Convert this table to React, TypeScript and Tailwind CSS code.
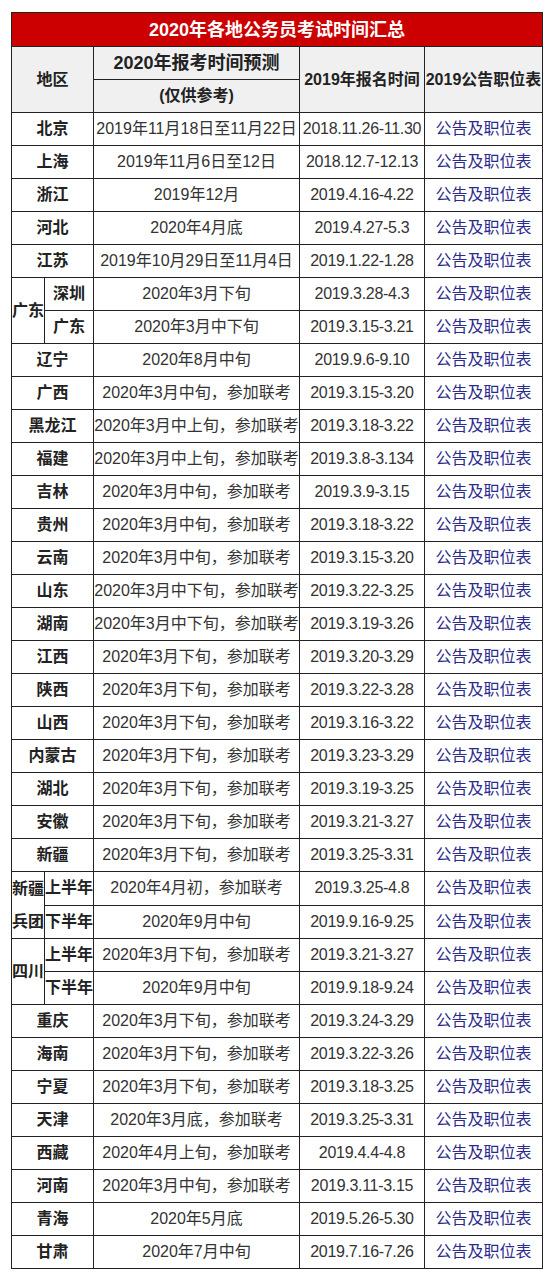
import { Fragment } from "react"

type Row = { name: string; pred: string; reg: string }
type Group = { group: string[]; items: Row[] }
type Entry = Row | Group

const entries: Entry[] = [
  { name: "北京", pred: "2019年11月18日至11月22日", reg: "2018.11.26-11.30" },
  { name: "上海", pred: "2019年11月6日至12日", reg: "2018.12.7-12.13" },
  { name: "浙江", pred: "2019年12月", reg: "2019.4.16-4.22" },
  { name: "河北", pred: "2020年4月底", reg: "2019.4.27-5.3" },
  { name: "江苏", pred: "2019年10月29日至11月4日", reg: "2019.1.22-1.28" },
  {
    group: ["广东"],
    items: [
      { name: "深圳", pred: "2020年3月下旬", reg: "2019.3.28-4.3" },
      { name: "广东", pred: "2020年3月中下旬", reg: "2019.3.15-3.21" },
    ],
  },
  { name: "辽宁", pred: "2020年8月中旬", reg: "2019.9.6-9.10" },
  { name: "广西", pred: "2020年3月中旬，参加联考", reg: "2019.3.15-3.20" },
  { name: "黑龙江", pred: "2020年3月中上旬，参加联考", reg: "2019.3.18-3.22" },
  { name: "福建", pred: "2020年3月中上旬，参加联考", reg: "2019.3.8-3.134" },
  { name: "吉林", pred: "2020年3月中旬，参加联考", reg: "2019.3.9-3.15" },
  { name: "贵州", pred: "2020年3月中旬，参加联考", reg: "2019.3.18-3.22" },
  { name: "云南", pred: "2020年3月中旬，参加联考", reg: "2019.3.15-3.20" },
  { name: "山东", pred: "2020年3月中下旬，参加联考", reg: "2019.3.22-3.25" },
  { name: "湖南", pred: "2020年3月中下旬，参加联考", reg: "2019.3.19-3.26" },
  { name: "江西", pred: "2020年3月下旬，参加联考", reg: "2019.3.20-3.29" },
  { name: "陕西", pred: "2020年3月下旬，参加联考", reg: "2019.3.22-3.28" },
  { name: "山西", pred: "2020年3月下旬，参加联考", reg: "2019.3.16-3.22" },
  { name: "内蒙古", pred: "2020年3月下旬，参加联考", reg: "2019.3.23-3.29" },
  { name: "湖北", pred: "2020年3月下旬，参加联考", reg: "2019.3.19-3.25" },
  { name: "安徽", pred: "2020年3月下旬，参加联考", reg: "2019.3.21-3.27" },
  { name: "新疆", pred: "2020年3月下旬，参加联考", reg: "2019.3.25-3.31" },
  {
    group: ["新疆", "兵团"],
    items: [
      { name: "上半年", pred: "2020年4月初，参加联考", reg: "2019.3.25-4.8" },
      { name: "下半年", pred: "2020年9月中旬", reg: "2019.9.16-9.25" },
    ],
  },
  {
    group: ["四川"],
    items: [
      { name: "上半年", pred: "2020年3月下旬，参加联考", reg: "2019.3.21-3.27" },
      { name: "下半年", pred: "2020年9月中旬", reg: "2019.9.18-9.24" },
    ],
  },
  { name: "重庆", pred: "2020年3月下旬，参加联考", reg: "2019.3.24-3.29" },
  { name: "海南", pred: "2020年3月下旬，参加联考", reg: "2019.3.22-3.26" },
  { name: "宁夏", pred: "2020年3月下旬，参加联考", reg: "2019.3.18-3.25" },
  { name: "天津", pred: "2020年3月底，参加联考", reg: "2019.3.25-3.31" },
  { name: "西藏", pred: "2020年4月上旬，参加联考", reg: "2019.4.4-4.8" },
  { name: "河南", pred: "2020年3月中旬，参加联考", reg: "2019.3.11-3.15" },
  { name: "青海", pred: "2020年5月底", reg: "2019.5.26-5.30" },
  { name: "甘肃", pred: "2020年7月中旬", reg: "2019.7.16-7.26" },
]

const cell = "h-[33px] border border-[#222] px-0 text-center align-middle whitespace-nowrap overflow-hidden"
const nameCls = `${cell} font-bold text-[#222]`
const headCls = `${nameCls} bg-[#f0f0f0]`

function DataCells({ r }: { r: Row }) {
  return (
    <>
      <td className={`${cell} text-[#333]`}>{r.pred}</td>
      <td className={`${cell} tracking-[-0.3px] text-[#333]`}>{r.reg}</td>
      <td className={`${cell} text-[#2b2b8c]`}>
        <a className="cursor-pointer">公告及职位表</a>
      </td>
    </>
  )
}

export default function App() {
  return (
    <div className="min-h-[1277px] bg-white pl-[11px] pt-[12px] [font-family:'Liberation_Sans','Noto_Sans_CJK_SC',sans-serif] text-[16px] leading-[20px]">
      <table className="w-[532px] table-fixed border-collapse [font-family:'Liberation_Sans','Noto_Sans_CJK_SC',sans-serif] text-[16px] leading-[20px]">
        <colgroup>
          <col className="w-[33px]" />
          <col className="w-[49px]" />
          <col className="w-[206px]" />
          <col className="w-[125px]" />
          <col className="w-[118px]" />
        </colgroup>
        <thead>
          <tr>
            <td
              colSpan={5}
              className="h-[34px] border border-[#222] bg-[#cc0000] text-center align-middle text-[18px] font-bold text-white"
            >
              2020年各地公务员考试时间汇总
            </td>
          </tr>
          <tr>
            <td rowSpan={2} colSpan={2} className={headCls}>
              地区
            </td>
            <td className={`${headCls} text-[18px]`}>2020年报考时间预测</td>
            <td rowSpan={2} className={headCls}>
              2019年报名时间
            </td>
            <td rowSpan={2} className={headCls}>
              2019公告职位表
            </td>
          </tr>
          <tr>
            <td className={headCls}>(仅供参考)</td>
          </tr>
        </thead>
        <tbody>
          {entries.map((e, i) =>
            "group" in e ? (
              <Fragment key={i}>
                {e.items.map((r, j) => (
                  <tr key={j}>
                    {j === 0 && (
                      <td
                        rowSpan={e.items.length}
                        className="border border-[#222] p-0 text-center align-middle font-bold text-[#222] leading-[33px]"
                      >
                        {e.group.map((g) => (
                          <div key={g}>{g}</div>
                        ))}
                      </td>
                    )}
                    <td className={nameCls}>{r.name}</td>
                    <DataCells r={r} />
                  </tr>
                ))}
              </Fragment>
            ) : (
              <tr key={i}>
                <td colSpan={2} className={nameCls}>
                  {e.name}
                </td>
                <DataCells r={e} />
              </tr>
            )
          )}
        </tbody>
      </table>
    </div>
  )
}
